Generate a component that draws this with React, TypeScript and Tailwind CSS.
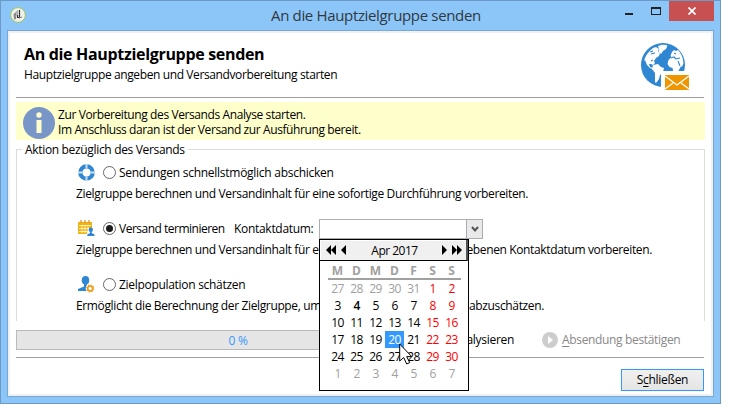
import type { ReactNode } from "react";

const weekdays = ["M", "D", "M", "D", "F", "S", "S"];
const weeks = [
  [27, 28, 29, 30, 31, 1, 2],
  [3, 4, 5, 6, 7, 8, 9],
  [10, 11, 12, 13, 14, 15, 16],
  [17, 18, 19, 20, 21, 22, 23],
  [24, 25, 26, 27, 28, 29, 30],
  [1, 2, 3, 4, 5, 6, 7],
];

function dayClass(week: number, column: number) {
  const day = weeks[week][column];
  if (week === 5 || (week === 0 && column < 5)) return "text-[#a0a0a0]";
  if (column > 4) return "text-[#ff0000]";
  if (day === 20) return "bg-[#3399ff] text-white";
  if (day === 4) return "font-semibold text-black";
  return "text-black";
}

function AppLogo() {
  return (
    <svg width="16" height="16" viewBox="0 0 16 16">
      <circle cx="8" cy="8" r="7.4" fill="#f0f1ed" stroke="#9cc653" strokeWidth="1" />
      <path d="M3.500 7 6 5v7l-2 .8z" fill="#8d8d8d" />
      <path d="M6 4.500 8 3v5L6.500 9z" fill="#aaa" />
      <path d="M9.500 3v7.500H7.500V8" fill="none" stroke="#333" strokeWidth="1.200" />
      <path d="m9 11 3-1" stroke="#777" />
    </svg>
  );
}

function GlobeMail() {
  return (
    <svg width="49" height="48" viewBox="0 0 49 48">
      <circle cx="22" cy="22" r="22" fill="#2f86d2" />
      <g fill="#fff">
        <path d="M3 18c1-5 4-9 9-13l3-1 3 2-1 2 2 2-1 3-3 2-2 3 1 2-2 2-2-1-2 0 1 3 3 1 1 2-4-2-3-3-2-5z" />
        <path d="M17 3c4-1.500 7-1.500 9.500-.5L25 6l-3 2-2 3-2-2 0-3z" />
        <path d="m12 22 5-1 3 3 3 1-1 4-3 3-1 4-3 4-1-1 0-9-3-4z" />
        <path d="m31 9 2-2 2 1 2-1c3 3 5 7 5.500 13l-1 3-2 1-2 4-3 4-2-2-1-5-3-1-2-3 1-4 3-3-1-1 1-3z" />
      </g>
      <path d="m9 9 3-1m-2 3 4-1m-4 8 2-1M30 15l3-1 2 2 4-1m-2 3 2 5m-6-13 2 1" fill="none" stroke="#2f86d2" strokeWidth="1.100" />
      <path d="M20 28h29v20H20z" fill="#fff" />
      <path d="M24 32h24v15H24z" fill="#ee9600" />
      <path d="m24 33 12 9 12-9M24 46l8-6m16 6-8-6" fill="none" stroke="#fff" strokeWidth="1.300" />
    </svg>
  );
}

function RingIcon() {
  return (
    <svg width="17" height="17" viewBox="0 0 17 17">
      <circle cx="8.500" cy="8.500" r="6.200" fill="none" stroke="#2f86d2" strokeWidth="4.200" />
      <path d="M8.500 0v4.400m0 8.200V17M0 8.500h4.400m8.200 0H17" stroke="#c5e0f6" strokeWidth="2" />
    </svg>
  );
}

function CalendarUserIcon() {
  return (
    <svg width="17" height="17" viewBox="0 0 17 17">
      <path d="M0 2h14v12H0z" fill="#edb413" />
      <path d="M3 0v3m4-3v3m4-3v3" stroke="#e88e25" strokeWidth="1.300" />
      <path d="M1 5.500h12M1 8.500h12M1 11.500h12M4 5v8m3-8v8m3-8v8" stroke="#fff3c2" strokeWidth=".9" />
      <path d="M9 17v-5h1V8h6v5h1v4z" fill="#fff" />
      <circle cx="12.800" cy="9.800" r="2.200" fill="#2f86d2" />
      <path d="M12 11h1.700v2l2.800 1.500V16H9.300v-1.500L12 13z" fill="#2f86d2" />
    </svg>
  );
}

function UserGearIcon() {
  return (
    <svg width="17" height="17" viewBox="0 0 17 17">
      <ellipse cx="7.500" cy="4.300" rx="3.700" ry="4.300" fill="#2f86d2" />
      <path d="M6 7h3v3l2 1-2 4H0v-2l6-2.500z" fill="#2f86d2" />
      <circle cx="12.200" cy="12.500" r="4.500" fill="#fff" />
      <circle cx="12.200" cy="12.500" r="2.500" fill="none" stroke="#ee9a16" strokeWidth="1.600" />
      <circle cx="12.200" cy="12.500" r="3.500" fill="none" stroke="#ee9a16" strokeWidth="1.100" strokeDasharray="1.375 1.375" />
    </svg>
  );
}

function Radio({ checked = false }: { checked?: boolean }) {
  return (
    <span className="flex size-[13px] shrink-0 items-center justify-center rounded-full border border-[#666] bg-white">
      {checked && <span className="size-[7px] rounded-full bg-[#1c1c1c]" />}
    </span>
  );
}

function Option({ icon, label, checked, extra, children }: { icon: ReactNode; label: ReactNode; checked?: boolean; extra?: ReactNode; children: ReactNode }) {
  return (
    <div className="h-14">
      <div className="flex h-5 items-center">
        <span className="mr-[8px] ml-[2px] w-[17px]">{icon}</span>
        <Radio checked={checked} />
        <span className="ml-[3px]">{label}</span>
        {extra}
      </div>
      <div className="mt-[3px] flex h-4 items-center justify-between tracking-[-0.36px]">{children}</div>
    </div>
  );
}

function DatePopup() {
  return (
    <div className="absolute top-[239px] left-[319px] h-[152px] w-[150px] border border-black bg-white tracking-normal">
      <div className="flex h-[21px] items-center justify-between border-r-2 border-b border-[#555] border-b-black bg-[#f0f0f0] pr-[4px] pl-[6px] shadow-[inset_1px_1px_0_#fff]">
        <svg width="21" height="10" viewBox="0 0 21 10">
          <path d="M5 0v10L0 5zM10 0v10L5 5zM20 0v10l-5-5z" />
        </svg>
        <span className="ml-px tracking-[-0.5px]">Apr 2017</span>
        <svg width="21" height="10" viewBox="0 0 21 10">
          <path d="M1 0v10l5-5zM11 0v10l5-5zM16 0v10l5-5z" />
        </svg>
      </div>
      <div className="mx-[8px] mt-[2px] grid h-[17px] w-[133px] grid-cols-7 items-center border-b-2 border-[#a0a0a0] text-center font-bold text-[#a0a0a0]">
        {weekdays.map((day, i) => <span key={i}>{day}</span>)}
      </div>
      <div className="ml-[8px] grid w-[133px] grid-cols-7 text-center text-[12px] tracking-[-0.7px]">
        {weeks.map((week, row) => week.map((day, column) => (
          <span key={`${row}-${column}`} className={`h-[17px] w-[19px] leading-[17px] ${dayClass(row, column)}`}>{day}</span>
        )))}
      </div>
    </div>
  );
}

export default function App() {
  return (
    <div className="relative h-[418px] w-[749px] overflow-hidden bg-white font-['Open_Sans','Noto_Sans',sans-serif] text-[12px] leading-[15px] tracking-[-0.3px] whitespace-nowrap text-black">
      <div className="h-[404px] w-[721px] border border-[#6b9ac8] bg-[#8cc6f9] px-[6px]">
        <header className="flex h-[29px] items-start pr-0">
          <span className="mt-[6px] ml-[3px] w-[16px]"><AppLogo /></span>
          <h1 className="mt-[3px] ml-[245px] w-[211px] text-[15px] leading-[22px] tracking-[-0.34px] text-[#303840]">An die Hauptzielgruppe senden</h1>
          <svg className="mt-[6px] ml-auto" width="44" height="10" viewBox="0 0 44 10">
            <path d="M0 6h8v2H0zM26 0h10v8H26zM27 2v5h8V2z" fill="#222" fillRule="evenodd" />
          </svg>
          <div className="flex h-5 w-[45px] items-center justify-center bg-[#c75050]">
            <svg width="8" height="8" viewBox="0 0 8 8"><path d="m.5.5 7 7m0-7-7 7" stroke="#fff" strokeWidth="1.700" /></svg>
          </div>
        </header>

        <main className="h-[367px] border border-[#76a8d6] bg-white px-[8px] shadow-[inset_0_0_0_2px_#f0f0f0]">
          <section className="mr-px flex h-[67px] justify-between border-b border-[#a0a0a0] pl-[8px]">
            <div>
              <h2 className="mt-[13px] text-[16px] leading-[20px] font-bold tracking-[-0.32px]">An die Hauptzielgruppe senden</h2>
              <p className="mt-[3px] tracking-[-0.39px]">Hauptzielgruppe angeben und Versandvorbereitung starten</p>
            </div>
            <span className="mt-[12px] mr-[14px]"><GlobeMail /></span>
          </section>

          <section className="mt-[4px] flex h-[38px] items-start bg-[#ffffcc] pl-[7px]">
            <svg className="mt-[5px]" width="32" height="32" viewBox="0 0 32 32">
              <circle cx="16" cy="16" r="16" fill="#7896c8" />
              <circle cx="16" cy="8" r="2.700" fill="#ffffcc" />
              <path d="M13.500 13h5v13h-5z" fill="#ffffcc" />
            </svg>
            <p className="mt-[5px] ml-[3px] tracking-[-0.4px]">Zur Vorbereitung des Versands Analyse starten.<br />Im Anschluss daran ist der Versand zur Ausführung bereit.</p>
          </section>

          <fieldset className="mt-[2px] h-[179px]">
            <div className="flex h-[15px] items-center">
              <span className="h-px w-[6px] bg-[#dcdcdc]" />
              <legend className="px-[3px] tracking-[-0.33px]">Aktion bezüglich des Versands</legend>
              <span className="h-px flex-1 bg-[#dcdcdc]" />
            </div>
            <div className="-mt-[7px] h-[171px] border-x border-[#dcdcdc] pt-[12px] pl-[59px]">
              <Option icon={<RingIcon />} label={<span className="tracking-[-0.27px]">Sendungen schnellstmöglich abschicken</span>}>
                <span>Zielgruppe berechnen und Versandinhalt für eine sofortige Durchführung vorbereiten.</span>
              </Option>
              <Option
                icon={<CalendarUserIcon />}
                label={<span className="tracking-[-0.5px]">Versand terminieren</span>}
                checked
                extra={<>
                  <span className="ml-auto w-[85px]">Kontaktdatum:</span>
                  <span className="mt-[2px] mr-[221px] flex h-5 w-[164px] border border-[#abadb3]">
                    <span className="flex-1 bg-white" />
                    <span className="flex w-[16px] items-center justify-center border-l border-[#abadb3] bg-[#e9e9e9]">
                      <svg width="8" height="7" viewBox="0 0 8 7"><path d="m1 1 3 3.500L7 1" fill="none" stroke="#555" strokeWidth="2" /></svg>
                    </span>
                  </span>
                </>}
              >
                <span>Zielgruppe berechnen und Versandinhalt für eine</span>
                <span className="mr-[52px]">angegebenen Kontaktdatum vorbereiten.</span>
              </Option>
              <Option icon={<UserGearIcon />} label="Zielpopulation schätzen">
                <span>Ermöglicht die Berechnung der Zielgruppe, um</span>
                <span className="mr-[160px]">abzuschätzen.</span>
              </Option>
            </div>
          </fieldset>

          <section className="mt-[9px] mr-px flex h-[28px] items-start border-b border-[#a0a0a0]">
            <div className="flex h-5 w-[390px] items-center justify-center border border-[#b9b9b9] bg-[#e5e5e5] pl-[54px] text-[#3399ff]">0 %</div>
            <span className="mt-[2px] flex w-[108px] justify-end">Analysieren</span>
            <svg className="mt-[2px] ml-[28px]" width="16" height="16" viewBox="0 0 16 16">
              <circle cx="8" cy="8" r="8" fill="#cdcdcd" /><path d="m6 4 5 4-5 4z" fill="#fff" />
            </svg>
            <span className="mt-[2px] ml-[4px] tracking-[-0.34px] text-[#888]"><u className="underline-offset-2">A</u>bsendung bestätigen</span>
          </section>

          <footer className="mr-px flex justify-end pt-[11px]">
            <button className="h-[22px] w-[83px] border border-[#3399ff] bg-linear-to-b from-[#f0f0f0] to-[#e5e5e5] leading-[20px]">S<u className="underline-offset-2">c</u>hließen</button>
          </footer>
        </main>
      </div>

      <DatePopup />
      <svg className="absolute top-[343px] left-[399px]" width="14" height="23" viewBox="0 0 14 23">
        <path d="M.7 1v17l4-3.500 3 6.500 3-1.400-3-6h5z" fill="#fff" stroke="#000" strokeWidth="1" />
      </svg>
    </div>
  );
}
